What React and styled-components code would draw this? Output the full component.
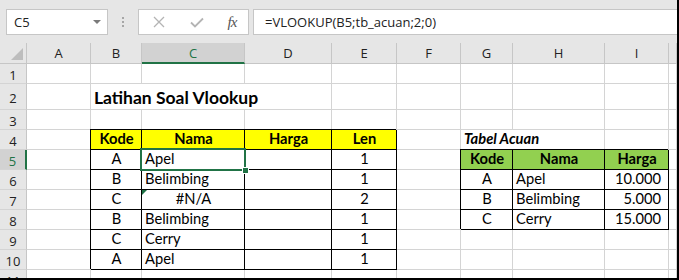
import React from 'react';
import styled, { createGlobalStyle } from 'styled-components';

const Global = createGlobalStyle`
  html, body { margin: 0; padding: 0; background: #fff; overflow: hidden; }
  #root { width: 679px; height: 280px; }
`;

const Frame = styled.div`
  width: 679px;
  height: 280px;
  box-sizing: border-box;
  border-right: 2px solid #000;
  border-bottom: 2px solid #000;
  display: flex;
  flex-direction: column;
  overflow: hidden;
  background: #fff;
`;

const FormulaBar = styled.div`
  height: 43px;
  flex: none;
  box-sizing: border-box;
  background: #e6e6e6;
  display: flex;
  align-items: flex-start;
  padding: 9px 0 0 6px;
`;

const UiBox = styled.div`
  height: 26px;
  box-sizing: border-box;
  background: #fff;
  border: 1px solid #c6c6c6;
  display: flex;
  align-items: center;
  font-family: "Open Sans", "Noto Sans", sans-serif;
  font-size: 13px;
  color: #222;
`;

const NameBox = styled(UiBox)`
  width: 102px;
  justify-content: space-between;
  padding: 0 6px 0 7px;
`;

const DropArrow = styled.span`
  width: 0;
  height: 0;
  border-left: 4px solid transparent;
  border-right: 4px solid transparent;
  border-top: 4px solid #7a7a7a;
`;

const Grip = styled.div`
  width: 30px;
  height: 26px;
  display: flex;
  flex-direction: column;
  align-items: center;
  justify-content: center;
  gap: 2px;
`;

const GripDot = styled.span`
  width: 2px;
  height: 2px;
  background: #a6a6a6;
`;

const FxBox = styled(UiBox)`
  width: 111px;
  display: grid;
  grid-template-columns: 40px 36px 34px;
  justify-items: center;
`;

const FxLabel = styled.span`
  font-family: "Liberation Serif", serif;
  font-style: italic;
  font-size: 15px;
  color: #555;
  letter-spacing: -1px;
`;

const FormulaInput = styled(UiBox)`
  flex: 1;
  margin-left: 4px;
  border-right: none;
  padding-left: 11px;
`;

const Sheet = styled.div`
  flex: 1;
  display: grid;
  grid-template-columns: 27px 64px 51px 103px 87px 65px 64px 52px 92px 64px 1fr;
  grid-template-rows: 21px 20px 26px repeat(8, 20px) 1fr;
  overflow: hidden;
`;

const Corner = styled.div`
  background: #e6e6e6;
  border-right: 1px solid #c6c6c6;
  border-bottom: 1px solid #c6c6c6;
  display: flex;
  align-items: flex-end;
  justify-content: flex-end;
  padding: 0 3px 3px 0;
`;

const ColHead = styled.div`
  background: ${p => (p.$sel ? '#d2d2d2' : '#e6e6e6')};
  border-right: 1px solid #c6c6c6;
  border-bottom: ${p => (p.$sel ? '2px solid #217346' : '1px solid #c6c6c6')};
  display: flex;
  align-items: center;
  justify-content: center;
  font-family: "Open Sans", "Noto Sans", sans-serif;
  font-size: 13px;
  color: ${p => (p.$sel ? '#217346' : '#222')};
`;

const RowHead = styled.div`
  background: ${p => (p.$sel ? '#d2d2d2' : '#e6e6e6')};
  border-right: ${p => (p.$sel ? '2px solid #217346' : '1px solid #c6c6c6')};
  border-bottom: 1px solid #d4d4d4;
  display: flex;
  align-items: center;
  justify-content: center;
  padding-top: 2px;
  font-family: "Open Sans", "Noto Sans", sans-serif;
  font-size: 13px;
  color: ${p => (p.$sel ? '#217346' : '#222')};
`;

const Cell = styled.div`
  position: relative;
  grid-column: span ${p => p.$span || 1};
  min-width: 0;
  background: ${p => p.$bg || 'transparent'};
  border-right: 1px solid ${p => (p.$boxed ? '#000' : '#d4d4d4')};
  border-bottom: 1px solid ${p => (p.$boxed ? '#000' : '#d4d4d4')};
  box-shadow: ${p => (p.$boxed ? '-1px -1px 0 #000' : 'none')};
  display: flex;
  align-items: flex-end;
  justify-content: ${p => p.$align || 'flex-start'};
  padding: 0 ${p => (p.$align === 'flex-end' ? '7px' : '2px')} 1px 3px;
  font-family: Lato, "Open Sans", sans-serif;
  font-size: ${p => (p.$title ? '17.5px' : '14.7px')};
  line-height: 1.2;
  font-weight: ${p => (p.$bold ? 700 : 400)};
  font-style: ${p => (p.$italic ? 'italic' : 'normal')};
  color: #000;
  white-space: nowrap;
`;

const Selection = styled.div`
  position: absolute;
  inset: -2px;
  border: 2px solid #217346;
  pointer-events: none;
  z-index: 2;
`;

const FillHandle = styled.span`
  position: absolute;
  right: -5px;
  bottom: -5px;
  width: 5px;
  height: 5px;
  background: #217346;
  border: 1px solid #fff;
`;

const ErrorMark = styled.span`
  position: absolute;
  top: 0;
  left: 0;
  width: 0;
  height: 0;
  border-top: 5px solid #1e7145;
  border-right: 5px solid transparent;
`;

const COLS = ['A', 'B', 'C', 'D', 'E', 'F', 'G', 'H', 'I', 'J'];
const YELLOW = '#ffff00';
const GREEN = '#92d050';
const C = 'center';
const R = 'flex-end';

const e = null;
const empty = n => Array.from({ length: n }, () => e);
const hd = (t, bg) => ({ t, bg, boxed: true, bold: true, align: C });
const d = (t, align) => ({ t, boxed: true, align });

const ROWS = [
  empty(10),
  [e, { t: 'Latihan Soal Vlookup', span: 3, bold: true, title: true }, ...empty(6)],
  empty(10),
  [e, hd('Kode', YELLOW), hd('Nama', YELLOW), hd('Harga', YELLOW), hd('Len', YELLOW), e,
    { t: 'Tabel Acuan', span: 2, bold: true, italic: true }, e, e],
  [e, d('A', C), { t: 'Apel', boxed: true, sel: true }, d(''), d('1', C), e,
    hd('Kode', GREEN), hd('Nama', GREEN), hd('Harga', GREEN), e],
  [e, d('B', C), d('Belimbing'), d(''), d('1', C), e, d('A', C), d('Apel'), d('10.000', R), e],
  [e, d('C', C), { t: '#N/A', boxed: true, align: C, err: true }, d(''), d('2', C), e,
    d('B', C), d('Belimbing'), d('5.000', R), e],
  [e, d('B', C), d('Belimbing'), d(''), d('1', C), e, d('C', C), d('Cerry'), d('15.000', R), e],
  [e, d('C', C), d('Cerry'), d(''), d('1', C), ...empty(5)],
  [e, d('A', C), d('Apel'), d(''), d('1', C), ...empty(5)],
  empty(10),
];

function CrossIcon() {
  return (
    <svg width="12" height="12" viewBox="0 0 12 12">
      <path d="M1 1 L11 11 M11 1 L1 11" stroke="#b4b4b4" strokeWidth="1.3" fill="none" />
    </svg>
  );
}

function CheckIcon() {
  return (
    <svg width="14" height="11" viewBox="0 0 14 11">
      <path d="M1 5.5 L5 9.5 L13 1.5" stroke="#b4b4b4" strokeWidth="1.8" fill="none" />
    </svg>
  );
}

function CornerTriangle() {
  return (
    <svg width="12" height="12" viewBox="0 0 12 12">
      <path d="M12 0 L12 12 L0 12 Z" fill="#bdbdbd" />
    </svg>
  );
}

export default function App() {
  return (
    <>
      <Global />
      <Frame>
        <FormulaBar>
          <NameBox>
            <span>C5</span>
            <DropArrow />
          </NameBox>
          <Grip>
            <GripDot />
            <GripDot />
            <GripDot />
          </Grip>
          <FxBox>
            <CrossIcon />
            <CheckIcon />
            <FxLabel>fx</FxLabel>
          </FxBox>
          <FormulaInput>=VLOOKUP(B5;tb_acuan;2;0)</FormulaInput>
        </FormulaBar>
        <Sheet>
          <Corner>
            <CornerTriangle />
          </Corner>
          {COLS.map(c => (
            <ColHead key={c} $sel={c === 'C'}>{c === 'J' ? '' : c}</ColHead>
          ))}
          {ROWS.map((row, ri) => (
            <React.Fragment key={ri}>
              <RowHead $sel={ri === 4}>{ri + 1}</RowHead>
              {row.map((cell, ci) =>
                cell ? (
                  <Cell
                    key={ci}
                    $span={cell.span}
                    $bg={cell.bg}
                    $boxed={cell.boxed}
                    $align={cell.align}
                    $bold={cell.bold}
                    $italic={cell.italic}
                    $title={cell.title}
                  >
                    {cell.err && <ErrorMark />}
                    {cell.t}
                    {cell.sel && (
                      <Selection>
                        <FillHandle />
                      </Selection>
                    )}
                  </Cell>
                ) : (
                  <Cell key={ci} />
                )
              )}
            </React.Fragment>
          ))}
        </Sheet>
      </Frame>
    </>
  );
}
